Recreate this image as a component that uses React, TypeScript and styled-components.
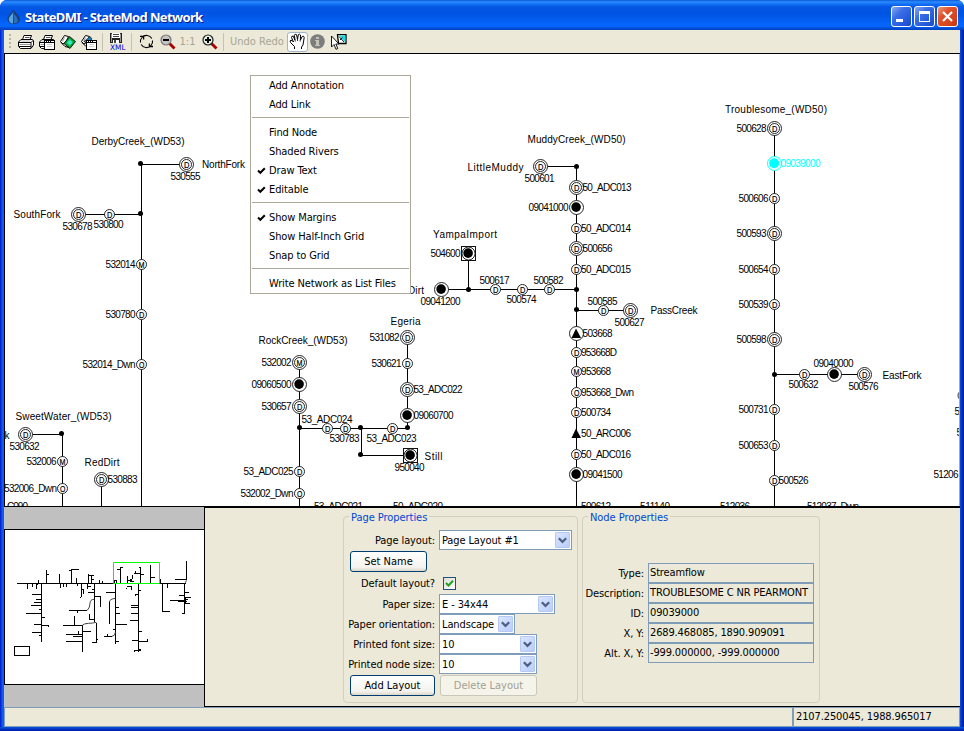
import React from "react";
import styled, { createGlobalStyle, css } from "styled-components";

const FACE = "#ece9d8";
const FIELD_EDGE = "#7f9db9";

const Global = createGlobalStyle`
  html, body { margin: 0; padding: 0; background: #fff; overflow: hidden; }
  * { box-sizing: border-box; }
  button { font: inherit; }
`;

const Window = styled.div`
  width: 964px;
  height: 731px;
  display: flex;
  flex-direction: column;
  font-family: "DejaVu Sans Condensed", "DejaVu Sans", sans-serif;
  font-stretch: condensed;
  font-size: 11px;
  letter-spacing: -0.22px;
  color: #000;
  background: #0831d9;
  border-radius: 7px 7px 0 0;
  overflow: hidden;
  white-space: nowrap;
`;

const TitleBar = styled.header`
  height: 30px;
  flex: none;
  display: flex;
  align-items: center;
  padding: 3px 6px 0 7px;
  background: linear-gradient(
    #0a5bd8 0, #2b8cff 2px, #1470f5 4px, #0457e3 7px, #0054e3 14px,
    #0461f5 22px, #0668ff 26px, #0550d8 28px, #0040bd 30px
  );
`;

const TitleText = styled.h1`
  margin: 0 auto 0 4px;
  font: bold 13px "Noto Sans", sans-serif;
  letter-spacing: -0.64px;
  color: #fff;
  text-shadow: 1px 1px 0 #0a1883;
`;

const CaptionButtons = styled.div`
  display: flex;
  gap: 2px;
`;

const CaptionButton = styled.button<{ $close?: boolean }>`
  width: 21px;
  height: 21px;
  padding: 0;
  border: 1px solid #fff;
  border-radius: 3px;
  background: ${(p) =>
    p.$close
      ? "linear-gradient(135deg, #eb9a80, #e0522c 35%, #d6431a 75%, #b83a12)"
      : "linear-gradient(135deg, #8aa9f0, #3b6fe6 35%, #2458dc 75%, #1a48c0)"};
  svg { display: block; }
`;

const Body = styled.div`
  flex: 1;
  min-height: 0;
  display: flex;
  flex-direction: column;
  padding: 0 4px 4px;
  background:
    linear-gradient(#0855dd, #0019a8) bottom / 100% 4px no-repeat,
    linear-gradient(90deg, #0019cf 0, #0831d9 1px, #166aee 3px, #0855dd 4px, #0855dd 960px, #003ddc 961px, #001ea0 963px);
`;

const ToolBar = styled.div`
  height: 23px;
  flex: none;
  display: flex;
  align-items: center;
  padding-left: 5px;
  background: ${FACE};
`;

const Grip = styled.i`
  width: 2px;
  height: 16px;
  margin-right: 6px;
  background: repeating-linear-gradient(#b8b5a6 0 2px, ${FACE} 2px 4px);
`;

const Tool = styled.span<{ $w?: number; $ml?: number; $on?: boolean }>`
  width: ${(p) => p.$w ?? 17}px;
  height: 20px;
  margin-left: ${(p) => p.$ml ?? 4}px;
  display: flex;
  align-items: center;
  justify-content: center;
  color: #a7a594;
  letter-spacing: 0;
  ${(p) => p.$on && css`
    background: #fff;
    border: 1px solid #a3b4c4;
    border-radius: 3px;
  `}
  svg { display: block; flex: none; }
`;

const ToolSep = styled.i<{ $ml?: number }>`
  width: 1px;
  height: 18px;
  margin-left: ${(p) => p.$ml ?? 5}px;
  background: #c5c2b2;
`;

const NetworkPane = styled.main`
  position: relative;
  height: 454px;
  flex: none;
  border: solid #000;
  border-width: 1px 0 1px 1px;
  background: #fff;
  svg { display: block; }
`;

const Popup = styled.ul`
  position: absolute;
  left: 245px;
  top: 21px;
  width: 161px;
  margin: 0;
  padding: 0;
  list-style: none;
  background: #fff;
  border: 1px solid #aca899;
`;

const PopupItem = styled.li`
  height: 19px;
  display: flex;
  align-items: center;
  letter-spacing: -0.12px;
`;

const CheckSlot = styled.span`
  width: 18px;
  padding-left: 6px;
  svg { display: block; }
`;

const PopupSep = styled.li`
  height: 9px;
  padding: 3px 1px 0;
  &::before { content: ""; display: block; height: 1px; background: #aca899; }
`;

const LowerPane = styled.section`
  height: 200px;
  flex: none;
  display: flex;
`;

const Overview = styled.aside`
  width: 200px;
  flex: none;
  display: flex;
  flex-direction: column;
  justify-content: center;
  background: #c0c0c0;
  svg { display: block; }
`;

const Properties = styled.div`
  flex: 1;
  display: flex;
  gap: 4px;
  padding: 8px 0 0 138px;
  background: ${FACE};
  border: solid #000;
  border-width: 1px 0 1px 1px;
`;

const Group = styled.section<{ $w: number }>`
  width: ${(p) => p.$w}px;
  height: 187px;
  display: flex;
  flex-direction: column;
  border: 1px solid #d0d0bf;
  border-radius: 4px;
`;

const GroupTitle = styled.h2`
  width: fit-content;
  height: 14px;
  margin: -6px 0 0 5px;
  padding: 0 2px;
  font: inherit;
  line-height: 14px;
  letter-spacing: -0.05px;
  color: #0046d5;
  background: ${FACE};
`;

const Row = styled.div<{ $h?: number; $mt?: number }>`
  height: ${(p) => p.$h ?? 20}px;
  margin-top: ${(p) => p.$mt ?? 0}px;
  display: flex;
  align-items: center;
`;

const Label = styled.label<{ $w: number }>`
  width: ${(p) => p.$w}px;
  margin-right: 4px;
  text-align: right;
  letter-spacing: -0.1px;
`;

const Combo = styled.div<{ $w: number }>`
  width: ${(p) => p.$w}px;
  height: 20px;
  display: flex;
  align-items: center;
  justify-content: space-between;
  padding: 0 1px 0 2px;
  letter-spacing: -0.12px;
  background: #fff;
  border: 1px solid ${FIELD_EDGE};
`;

const ComboArrow = styled.span`
  width: 15px;
  height: 16px;
  display: grid;
  place-items: center;
  border-radius: 1px;
  border: 1px solid #b5c9f5;
  background: linear-gradient(135deg, #dbe6ff, #b9cdfa);
`;

const PushButton = styled.button<{ $w: number; $ml: number }>`
  width: ${(p) => p.$w}px;
  height: 21px;
  margin-left: ${(p) => p.$ml}px;
  padding: 0;
  color: #000;
  border: 1px solid #003c74;
  border-radius: 3px;
  background: linear-gradient(#fff, #f4f3ee 80%, #dcd8cb);
  &:disabled {
    color: #a1a192;
    border-color: #c9c7ba;
    background: #f5f4ea;
  }
`;

const CheckBox = styled.span`
  width: 13px;
  height: 13px;
  margin-left: 4px;
  display: grid;
  place-items: center;
  border: 1px solid #1c5180;
  background: linear-gradient(135deg, #dcdcd7, #fff);
`;

const ReadOnlyField = styled.output`
  width: 166px;
  height: 20px;
  padding-left: 1px;
  line-height: 18px;
  letter-spacing: -0.15px;
  border: 1px solid ${FIELD_EDGE};
  background: ${FACE};
`;

const StatusBar = styled.footer`
  height: 20px;
  display: flex;
  background: ${FACE};
`;

const StatusCell = styled.div<{ $w?: number }>`
  ${(p) => (p.$w ? `width: ${p.$w}px;` : "flex: 1;")}
  padding-left: 2px;
  line-height: 18px;
  letter-spacing: -0.12px;
  border: 1px solid ${FIELD_EDGE};
`;

/* ---------- icons ---------- */

const Drop = () => (
  <svg width="14" height="16" viewBox="0 0 14 16">
    <path d="M6.500 0C8 4 13 6.500 13 10.200A6.300 5.600 0 0 1 .5 10.200C.5 6.500 5 4 6.500 0Z" fill="#173f80" />
    <path d="M6.300 2C6.500 5 1.800 7 1.800 10.400A4.600 4.600 0 0 0 6 14.500Z" fill="#57a5dc" />
    <path d="M7 5Q10.500 8 10.800 11T7 14.500Z" fill="#2a6fb8" />
  </svg>
);

const PrinterShape = () => (
  <g>
    <path d="M4.500 5.500L6 1.500H13.500L12 5.500" fill="#fff" stroke="#000" />
    <path d="M7 3.500H11.500" stroke="#555" />
    <path d="M.5 8L3 5.500H14.500L15.500 7V11L13 14.500H2.500L.5 12.500Z" fill="#fff" stroke="#000" />
    <path d="M1 8.500H13L15 6.500M13 8.500V14" fill="none" stroke="#000" />
    <path d="M1.500 10.500H12.500" stroke="#999" />
    <path d="M1 12.500H13" stroke="#000" />
    <path d="M3 7H12" stroke="#b4b4b4" />
  </g>
);

const Printer = () => (
  <svg width="16" height="16" viewBox="0 0 16 16"><PrinterShape /></svg>
);

const PagePane = () => (
  <g shapeRendering="crispEdges">
    <path d="M5 6h11v10H5z" fill="#000" />
    <path d="M6 9h9v6H6z" fill="#fff" />
    <path d="M6 7h1v1H6zM8 7h1v1H8zM10 7h1v1h-1zM12 7h3v1h-3z" fill="#fff" />
    <path d="M8 10h5v1H8zM8 12h5v1H8z" fill="#d0d0d0" />
  </g>
);

const PrinterPage = () => (
  <svg width="16" height="16" viewBox="0 0 16 16"><PrinterShape /><PagePane /></svg>
);

const Sheets = () => (
  <g stroke="#000" fill="#fff">
    <path d="M.5 7.500L4.500 1.500 8.500 2.500 6 8 3 10Z" />
    <path d="M1 8.500L5 12.500 9 13.500" fill="none" />
    <path d="M4.500 3.500L2.500 7.500" stroke="#999" />
  </g>
);

const ExportMap = () => (
  <svg width="16" height="16" viewBox="0 0 16 16">
    <Sheets />
    <path d="M9.500 2.500L15.500 7.500 10 14.500 4 9.500Z" fill="#0b9a3a" stroke="#000" strokeWidth=".8" />
    <path d="M9.500 5L13 8 9.800 12 6.500 9Z" fill="#25e06a" />
    <path d="M8.500 7h3v3h-3z" fill="#30e8e8" />
  </svg>
);

const ExportPage = () => (
  <svg width="16" height="16" viewBox="0 0 16 16">
    <Sheets />
    <path d="M3 7.500L9 2.500 11 5 6 10Z" fill="#1c7db8" stroke="#000" strokeWidth=".6" />
    <PagePane />
  </svg>
);

const SaveXml = () => (
  <svg width="17" height="17" viewBox="0 0 17 17">
    <g shapeRendering="crispEdges">
      <path d="M1 0h12v10H1z" fill="#222" />
      <path d="M3 0h8v5H3zM4 7h6v3H4z" fill="#fff" />
      <path d="M2 1h1v8H2zM11 1h1v8h-1z" fill="#9a9a9a" />
      <path d="M4 1h6v1H4zM4 3h6v1H4zM5 7h2v3H5z" fill="#444" />
    </g>
    <text x="1" y="16.700" fontFamily="DejaVu Sans" fontSize="7.500" letterSpacing="0" textLength="15.500" lengthAdjust="spacingAndGlyphs" fill="#0000e0">XML</text>
  </svg>
);

const Refresh = () => (
  <svg width="15" height="15" viewBox="0 0 15 15" fill="none" stroke="#000" strokeWidth="1.100">
    <path d="M3 3.500A6 6 0 0 1 12.800 4.500M13.500 6.500A6 6 0 0 1 12 11.500M12 11.500A6 6 0 0 1 2.200 10.500M1.500 8.500A6 6 0 0 1 3 3.500" />
    <path d="M1 2.300H4.600V5.500M14 12.500H10.400V9.500" strokeWidth="1.300" />
  </svg>
);

const Magnifier = ({ plus }: { plus?: boolean }) => (
  <svg width="16" height="16" viewBox="0 0 16 16">
    <path d="M9.500 9.500L14.500 14.500" stroke="#a80000" strokeWidth="2.800" />
    <circle cx="6" cy="6" r="5" fill={plus ? "#dff2e4" : "#c4c4c4"} stroke={plus ? "#222" : "#777"} strokeWidth="1.200" />
    <path d={plus ? "M3 6H9M6 3V9" : "M3 6H9"} stroke="#000" strokeWidth="2" />
  </svg>
);

const Hand = () => (
  <svg width="17" height="17" viewBox="0 0 17 17">
    <path
      d="M5.500 16V13.500L1.500 9.500Q.3 7.500 2 7.200 3.300 7.200 4.500 9L2.500 4.500Q2.500 2.500 4.200 3.200L6 7 5.300 2.200Q6 .4 7.600 1.700L8.500 6.500 9.300 1.700Q10.600 .4 11.500 2L11.400 7 13.200 3.500Q15 2.500 15.200 4.500L14 12 12.500 14V16"
      fill="#fff" stroke="#000"
    />
    <path d="M6.200 7v1.500M8.600 6.500V8M11.200 7v1.500" stroke="#000" strokeWidth=".8" />
  </svg>
);

const Info = () => (
  <svg width="15" height="15" viewBox="0 0 15 15">
    <circle cx="7.500" cy="7.500" r="7.300" fill="#7d7d7d" />
    <path d="M6 3h3v2H6zM5 6h4v5h1v1H5v-1h1V7H5z" fill="#c4c2b6" />
  </svg>
);

const SelectArea = () => (
  <svg width="17" height="16" viewBox="0 0 17 16">
    <path d="M7.500 .7H16V9.500H8.500Z" fill="#fff" stroke="#000" strokeWidth="1.300" />
    <path d="M9 1.500h6.300v7z" fill="#19e0e6" />
    <path d="M9 2.500L14 8M10 6L12.500 3.500" stroke="#000" strokeWidth=".9" />
    <path d="M1.500 2V13L4 10.500 6 15.300 7.800 14.500 5.800 10H9Z" fill="#fff" stroke="#000" strokeWidth=".9" />
  </svg>
);

const MenuCheck = () => (
  <svg width="9" height="8" viewBox="0 0 9 8">
    <path d="M1 3.500L3.300 5.800 7.800 1.200" fill="none" stroke="#000" strokeWidth="2" />
  </svg>
);

const Chevron = () => (
  <svg width="9" height="7" viewBox="0 0 9 7">
    <path d="M.8 1.200L4.500 4.900 8.200 1.200" fill="none" stroke="#4d6185" strokeWidth="2.200" />
  </svg>
);

/* ---------- network drawing ---------- */

type NodeKind = "small" | "big" | "gauge" | "import" | "tri" | "triRing" | "dot";
type NetNode = [NodeKind, number, number, string?];

const nodes: NetNode[] = [
  ["dot", 140.500, 163.500], ["big", 186.500, 164.500, "D"], ["big", 78.500, 214.500, "D"],
  ["small", 109.500, 214.500, "D"], ["dot", 140.500, 213.500], ["small", 141.500, 264.500, "M"],
  ["small", 141.500, 314.500, "D"], ["small", 141.500, 364.500, "O"],
  ["big", 25.500, 434.500, "D"], ["dot", 61.500, 433.500], ["small", 62.500, 461.500, "M"],
  ["small", 62.500, 488.500, "O"], ["big", 101.500, 479.500, "D"],
  ["big", 299.500, 362.500, "M"], ["gauge", 299.500, 384.500], ["big", 299.500, 406.500, "D"],
  ["dot", 299.500, 427.500], ["small", 327.500, 428.500, "D"], ["small", 345.500, 428.500, "D"],
  ["dot", 360.500, 427.500], ["small", 392.500, 428.500, "D"], ["dot", 407.500, 427.500],
  ["dot", 360.500, 454.500], ["import", 410.500, 455.500],
  ["small", 299.500, 471.500, "D"], ["small", 299.500, 493.500, "O"],
  ["big", 407.500, 337.500, "D"], ["small", 407.500, 363.500, "D"], ["big", 407.500, 389.500, "D"],
  ["gauge", 407.500, 415.500],
  ["big", 540.500, 166.500, "D"], ["dot", 576.500, 166.500], ["big", 576.500, 187.500, "D"],
  ["gauge", 576.500, 207.500], ["small", 576.500, 228.500, "D"], ["big", 576.500, 248.500, "D"],
  ["small", 576.500, 269.500, "D"], ["import", 468.500, 253.500], ["dot", 468.500, 289.500],
  ["gauge", 441.500, 289.500], ["small", 495.500, 289.500, "D"], ["small", 522.500, 289.500, "D"],
  ["small", 549.500, 289.500, "D"], ["dot", 576.500, 289.500], ["dot", 576.500, 309.500],
  ["small", 603.500, 310.500, "D"], ["big", 630.500, 310.500, "D"],
  ["triRing", 576.500, 333.500], ["small", 576.500, 352.500, "D"], ["small", 576.500, 371.500, "M"],
  ["small", 576.500, 392.500, "O"], ["small", 576.500, 412.500, "D"], ["tri", 576.500, 433.500],
  ["small", 576.500, 454.500, "D"], ["gauge", 576.500, 474.500],
  ["big", 774.500, 128.500, "D"], ["small", 774.500, 198.500, "D"], ["big", 774.500, 233.500, "D"],
  ["small", 774.500, 269.500, "D"], ["small", 774.500, 304.500, "D"], ["big", 774.500, 339.500, "D"],
  ["dot", 774.500, 374.500], ["small", 804.500, 374.500, "D"], ["gauge", 834.500, 374.500],
  ["big", 864.500, 374.500, "D"], ["small", 774.500, 409.500, "D"], ["small", 774.500, 445.500, "D"],
  ["small", 774.500, 480.500, "D"], ["small", 963, 395.500],
];

const W6 = 30;
type NetLabel = [string, number, number, number];

const labels: NetLabel[] = [
  ["DerbyCreek_(WD53)", 91.500, 142, 93], ["NorthFork", 202, 165, 43], ["530555", 170.500, 177, W6],
  ["SouthFork", 13.500, 215, 47], ["530678", 62.500, 227, W6], ["530800", 93.500, 225, W6],
  ["532014", 105.500, 265, W6], ["530780", 105.500, 315, W6], ["532014_Dwn", 82.500, 365, 53],
  ["SweetWater_(WD53)", 15.500, 417, 96], ["k", 4.500, 436, 5], ["530632", 9.500, 447, W6],
  ["532006", 26.500, 462, W6], ["RedDirt", 84.500, 463, 35], ["530883", 107.500, 480, W6],
  ["532006_Dwn", 4, 489, 53], ["C090", 7, 507, 21],
  ["RockCreek_(WD53)", 258.500, 341, 89], ["532002", 261.500, 363, W6], ["09060500", 251.500, 385, 40],
  ["530657", 261.500, 407, W6], ["53_ADC024", 301.500, 420, 51], ["530783", 329.500, 439, W6],
  ["53_ADC023", 366.500, 439, 50], ["53_ADC025", 243.500, 472, 50], ["532002_Dwn", 240.500, 494, 53],
  ["Egeria", 390.500, 322, 30], ["531082", 369.500, 338, W6], ["530621", 371.500, 364, W6],
  ["53_ADC022", 413.500, 390, 49], ["09060700", 413.500, 416, 40], ["Still", 424.500, 457, 18],
  ["950040", 394.500, 468, W6], ["53_ADC021", 314, 507, 49], ["50_ADC020", 393, 507, 50],
  ["MuddyCreek_(WD50)", 527.500, 140, 98], ["LittleMuddy", 467.500, 168, 56], ["500601", 524.500, 179, W6],
  ["50_ADC013", 582.500, 188, 49], ["09041000", 528.500, 208, 40], ["50_ADC014", 581, 229, 50],
  ["500656", 582.500, 249, W6], ["50_ADC015", 581, 270, 50], ["YampaImport", 433, 235, 64],
  ["504600", 430.500, 254, W6], ["RedDirt", 389, 291, 35], ["09041200", 420.500, 302, 40],
  ["500617", 479.500, 281, W6], ["500574", 506.500, 300, W6], ["500582", 533.500, 281, W6],
  ["500585", 587.500, 302, W6], ["500627", 614.500, 323, W6], ["PassCreek", 650.500, 311, 47],
  ["503668", 582.500, 334, W6], ["953668D", 581, 353, 36], ["953668", 581, 372, W6],
  ["953668_Dwn", 581, 393, 53], ["500734", 581, 413, W6], ["50_ARC006", 581, 434, 50],
  ["50_ADC016", 581, 455, 50], ["09041500", 582.500, 475, 40], ["500612", 581, 507, W6],
  ["511140", 640, 507, W6], ["Troublesome_(WD50)", 725, 110, 102], ["500628", 736.500, 129, W6],
  ["500606", 738.500, 199, W6], ["500593", 736.500, 234, W6], ["500654", 738.500, 270, W6],
  ["500539", 738.500, 305, W6], ["500598", 736.500, 340, W6], ["09040000", 813.500, 364, 40],
  ["500632", 788.500, 385, W6], ["500576", 848.500, 387, W6], ["EastFork", 882.500, 376, 39],
  ["500731", 738.500, 410, W6], ["500653", 738.500, 446, W6], ["500526", 778.500, 481, W6],
  ["512036", 720, 507, W6], ["512037_Dwn", 807, 507, 52], ["512", 954.500, 412, 15],
  ["512", 956.500, 433, 15], ["51206", 933.500, 475, 25],
];

const channels =
  "M140 164.500H186M140.500 214.500H78M141.500 164V506M25 434.500H62.500V506M101.500 480V506" +
  "M299.500 363V506M299 428.500H407.500V338M361.500 428V455.500H410M540 166.500H576.500V506" +
  "M441 289.500H576M468.500 254V289M576 310.500H630M774.500 129V506M774 374.500H864";

const NodeGlyph = ({ node: [kind, x, y, letter] }: { node: NetNode }) => {
  const ring = { fill: "#fff", stroke: "#111", strokeWidth: 0.9 };
  const big = kind === "big";
  return (
    <g transform={`translate(${x} ${y})`}>
      {kind === "dot" && <circle r="2.500" />}
      {kind === "import" && <rect x="-7" y="-7" width="14" height="14" {...ring} strokeWidth="1" shapeRendering="crispEdges" />}
      {(big || kind === "gauge" || kind === "import" || kind === "triRing") && <circle r={kind === "import" ? 6.500 : 7} {...ring} />}
      {(big || kind === "small") && <circle r="5" {...ring} />}
      {(kind === "gauge" || kind === "import") && <circle cx="-.4" cy="-.4" r="4.800" />}
      {(kind === "tri" || kind === "triRing") && <path d="M-.5 -5L4.500 4.500H-5Z" />}
      {letter && (
        <text
          x={letter === "M" ? -3 : -2.600}
          y="3.300"
          fontSize="9.300"
          textLength={letter === "M" ? 6 : 5.400}
          lengthAdjust="spacingAndGlyphs"
          stroke="#000"
          strokeWidth=".2"
        >
          {letter}
        </text>
      )}
    </g>
  );
};

const Network = () => (
  <svg width="955" height="452" viewBox="5 54 955 452" fontFamily="Liberation Sans, Arial, sans-serif" fontSize="10" letterSpacing="0">
    <path d={channels} fill="none" stroke="#000" shapeRendering="crispEdges" />
    {nodes.map((n, i) => <NodeGlyph key={i} node={n} />)}
    {labels.map(([t, x, cy, w], i) => (
      <text key={i} x={x} y={cy + 3.200} textLength={w}>{t}</text>
    ))}
    <g fill="#0ff">
      <circle cx="774.500" cy="163.500" r="7" fill="#fff" stroke="#0ff" />
      <circle cx="774.200" cy="163.200" r="5" />
      <text x="780.500" y="167.200" textLength="40">09039000</text>
    </g>
    <path d="M959.500 54V506" stroke="#aca899" />
  </svg>
);

/* Overview drawing, laid out on a grid three times finer than the screen. */
const streams =
  "M51 235H558M82 235V253M97 235V245M109 253V242L113 236M115 225V235M124 235V412M139 195V235M139 208H147" +
  "M178 207V235M181 235V250M190 235V247M199 235V247M208 196H214M214 235V193H237M229 219V235M232 235V243" +
  "M265 207V235M265 211H281M274 211V222M272 222H282M274 222V235M298 225V235M307 229V235M342 235V225H350V235" +
  "M96 268H124M108 283H124M102 292H124M93 301H124M117 313H124M78 325H124M124 337H134M102 358H124M124 361H146V366M96 382H124M118 390H124" +
  "M244 235V277M239 276H244M244 253H250V266M262 235V252M262 244H272M283 235V352M275 253H283M264 262H283M283 274H301V305" +
  "M207 316H262M232 316V323M268 328V343H283M189 361H247M223 334V361M247 361V440M289 355V412H276M289 403H294" +
  "M247 379H273M235 379V388M198 388H247M219 394H247M198 409H247" +
  "M346 235V416M318 262H346M328 358V291M346 307H356M346 325H360M346 358H381M340 373H346M346 409H357M312 394H336M322 388V394" +
  "M361 235V187H369M351 193H361M382 212V235M382 226H396M391 222V230H402M397 210V222M391 222H397M421 187V235M402 205H421M406 198V205M417 187H421M421 208H432" +
  "M451 180V235M451 217H465M481 222V235M379 250H382M382 244H394V254M415 235V440M415 256H424M405 274V268H415" +
  "M393 301H415M393 307H415M393 325H415M390 346H415M415 379H426M396 406H415M415 409H443V402M402 442V436H423M415 434H422" +
  "M487 235V319H510M502 235V248M553 235V325H546M559 168V226M525 223H559M553 262H567M537 271H553M553 277H573M553 283H565M510 286H556M534 289H560M556 280V295H570";

const bends =
  "M283 283Q270 283 270 295T262 316M247 361Q253 355 265 355T289 352M346 280Q329 282 328 291M336 394Q346 392 346 382M559 226Q558 233 554 235";

const OverviewMap = () => (
  <svg width="200" height="156" viewBox="12 72 600 468">
    <rect x="12" y="72" width="600" height="468" fill="#000" />
    <rect x="15" y="75" width="600" height="462" fill="#fff" />
    <path d={streams} fill="none" stroke="#000" strokeWidth="3" shapeRendering="crispEdges" />
    <path d={bends} fill="none" stroke="#444" strokeWidth="3" />
    <rect x="43.500" y="424.500" width="45" height="27" fill="none" stroke="#000" strokeWidth="3" />
    <path d="M340.500 235.500V172.500H478.500V235.500Z" fill="none" stroke="#0f0" strokeWidth="3" />
  </svg>
);

/* ---------- page ---------- */

const Item = ({ checked, children }: { checked?: boolean; children: React.ReactNode }) => (
  <PopupItem>
    <CheckSlot>{checked && <MenuCheck />}</CheckSlot>
    {children}
  </PopupItem>
);

const Select = ({ width, value }: { width: number; value: string }) => (
  <Combo $w={width}>
    {value}
    <ComboArrow><Chevron /></ComboArrow>
  </Combo>
);

const nodeFields = [
  ["Type:", "Streamflow"],
  ["Description:", "TROUBLESOME C NR PEARMONT"],
  ["ID:", "09039000"],
  ["X, Y:", "2689.468085, 1890.909091"],
  ["Alt. X, Y:", "-999.000000, -999.000000"],
];

export default function App() {
  return (
    <>
      <Global />
      <Window>
        <TitleBar>
          <Drop />
          <TitleText>StateDMI - StateMod Network</TitleText>
          <CaptionButtons>
            <CaptionButton aria-label="Minimize">
              <svg width="19" height="19"><path d="M4 12h7v3H4z" fill="#fff" /></svg>
            </CaptionButton>
            <CaptionButton aria-label="Maximize">
              <svg width="19" height="19"><path d="M4 4h11v11H4zM5 7v7h9V7z" fill="#fff" fillRule="evenodd" /></svg>
            </CaptionButton>
            <CaptionButton aria-label="Close" $close>
              <svg width="19" height="19"><path d="M5 5L14 14M14 5L5 14" stroke="#fff" strokeWidth="2.200" /></svg>
            </CaptionButton>
          </CaptionButtons>
        </TitleBar>
        <Body>
          <ToolBar>
            <Grip />
            <Tool $ml={0}><Printer /></Tool>
            <Tool><PrinterPage /></Tool>
            <Tool><ExportMap /></Tool>
            <Tool><ExportPage /></Tool>
            <ToolSep />
            <Tool $ml={6}><SaveXml /></Tool>
            <ToolSep />
            <Tool $ml={6}><Refresh /></Tool>
            <Tool><Magnifier /></Tool>
            <Tool $ml={3}>1:1</Tool>
            <Tool $ml={5}><Magnifier plus /></Tool>
            <ToolSep $ml={5} />
            <Tool $w={28} $ml={5}>Undo</Tool>
            <Tool $w={27} $ml={1}>Redo</Tool>
            <Tool $w={21} $ml={2} $on><Hand /></Tool>
            <Tool $w={15} $ml={2}><Info /></Tool>
            <Tool $ml={5}><SelectArea /></Tool>
          </ToolBar>
          <NetworkPane>
            <Network />
            <Popup>
              <Item>Add Annotation</Item>
              <Item>Add Link</Item>
              <PopupSep />
              <Item>Find Node</Item>
              <Item>Shaded Rivers</Item>
              <Item checked>Draw Text</Item>
              <Item checked>Editable</Item>
              <PopupSep />
              <Item checked>Show Margins</Item>
              <Item>Show Half-Inch Grid</Item>
              <Item>Snap to Grid</Item>
              <PopupSep />
              <Item>Write Network as List Files</Item>
            </Popup>
          </NetworkPane>
          <LowerPane>
            <Overview><OverviewMap /></Overview>
            <Properties>
              <Group $w={235}>
                <GroupTitle>Page Properties</GroupTitle>
                <Row $mt={5}><Label $w={91}>Page layout:</Label><Select width={133} value="Page Layout #1" /></Row>
                <Row $mt={1} $h={21}><PushButton $w={77} $ml={6}>Set Name</PushButton></Row>
                <Row $h={22}><Label $w={91}>Default layout?</Label><CheckBox>
                  <svg width="9" height="9" viewBox="0 0 9 9"><path d="M1 4L3.500 6.500 8 1.800" fill="none" stroke="#21a121" strokeWidth="2" /></svg>
                </CheckBox></Row>
                <Row><Label $w={91}>Paper size:</Label><Select width={116} value="E - 34x44" /></Row>
                <Row><Label $w={91}>Paper orientation:</Label><Select width={76} value="Landscape" /></Row>
                <Row><Label $w={91}>Printed font size:</Label><Select width={98} value="10" /></Row>
                <Row><Label $w={91}>Printed node size:</Label><Select width={98} value="10" /></Row>
                <Row $mt={1} $h={21}>
                  <PushButton $w={85} $ml={6}>Add Layout</PushButton>
                  <PushButton $w={97} $ml={5} disabled>Delete Layout</PushButton>
                </Row>
              </Group>
              <Group $w={238}>
                <GroupTitle>Node Properties</GroupTitle>
                {nodeFields.map(([label, value], i) => (
                  <Row key={label} $mt={i === 0 ? 38 : 0}>
                    <Label $w={61}>{label}</Label>
                    <ReadOnlyField>{value}</ReadOnlyField>
                  </Row>
                ))}
              </Group>
            </Properties>
          </LowerPane>
          <StatusBar>
            <StatusCell />
            <StatusCell $w={167}>2107.250045, 1988.965017</StatusCell>
          </StatusBar>
        </Body>
      </Window>
    </>
  );
}
